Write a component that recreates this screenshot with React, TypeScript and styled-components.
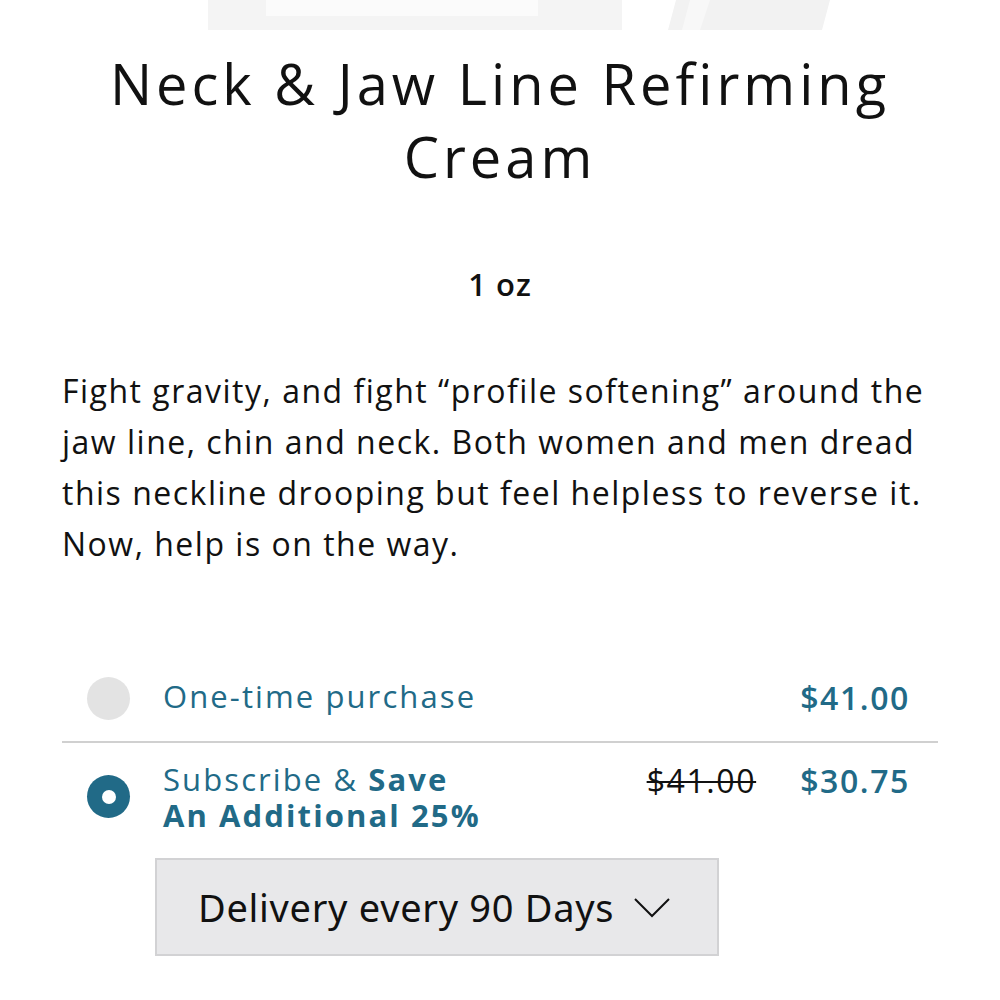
import styled, { createGlobalStyle } from 'styled-components';
import { useState } from 'react';

const GlobalStyle = createGlobalStyle`
  body {
    margin: 0;
    background: #ffffff;
    font-family: 'Open Sans', 'Noto Sans', sans-serif;
  }
`;

const TEAL = '#216a87';

const Page = styled.div`
  width: 1000px;
  height: 1000px;
  overflow: hidden;
  display: flex;
  flex-direction: column;
`;

const ImageStrip = styled.svg`
  display: block;
  width: 1000px;
  height: 30px;
`;

const Content = styled.div`
  padding: 0 62px;
  display: flex;
  flex-direction: column;
`;

const Title = styled.h1`
  margin: 17px 0 0;
  text-align: center;
  font-size: 56px;
  line-height: 73px;
  font-weight: 400;
  color: #111;
  letter-spacing: 4px;
`;

const Size = styled.div`
  margin-top: 70px;
  text-align: center;
  font-size: 31px;
  font-weight: 600;
  color: #111;
  letter-spacing: 1px;
`;

const Description = styled.p`
  margin: 60px 0 0;
  font-size: 32px;
  line-height: 51px;
  color: #111;
  letter-spacing: 1.5px;
`;

const Options = styled.div`
  margin-top: 93px;
  display: flex;
  flex-direction: column;
`;

const OptionRow = styled.label<{ $divider?: boolean }>`
  display: grid;
  grid-template-columns: 76px 1fr auto;
  align-items: start;
  padding: ${(p) => (p.$divider ? '11px 28px 21px 25px' : '13px 28px 0 25px')};
  border-bottom: ${(p) => (p.$divider ? '2px solid #d0d0d0' : 'none')};
  cursor: pointer;
`;

const Radio = styled.span<{ $checked?: boolean }>`
  align-self: center;
  width: 43px;
  height: 43px;
  border-radius: 50%;
  box-sizing: border-box;
  margin-top: 4px;
  background: ${(p) => (p.$checked ? TEAL : '#e3e3e3')};
  display: flex;
  align-items: center;
  justify-content: center;

  &::after {
    content: '';
    width: 14px;
    height: 14px;
    border-radius: 50%;
    background: #fff;
    display: ${(p) => (p.$checked ? 'block' : 'none')};
  }
`;

const OptionLabel = styled.div`
  font-size: 31px;
  line-height: 36px;
  color: ${TEAL};
  padding-top: 5px;
  letter-spacing: 2.1px;

  b {
    font-weight: 700;
    letter-spacing: 2.1px;
  }
`;

const Prices = styled.div`
  display: flex;
  gap: 44px;
  font-size: 32px;
  line-height: 36px;
  padding-top: 7px;
  letter-spacing: 1.6px;
`;

const OldPrice = styled.span`
  color: #111;
  text-decoration: line-through;
  text-decoration-thickness: 2px;
`;

const Price = styled.span`
  color: ${TEAL};
  font-weight: 600;
`;

const Delivery = styled.button`
  margin: 25px 0 0 93px;
  width: 564px;
  height: 98px;
  box-sizing: border-box;
  background: #e8e8ea;
  border: 2px solid #d2d2d4;
  display: flex;
  align-items: center;
  gap: 19px;
  padding: 0 0 0 41px;
  font-family: 'Noto Sans', 'Open Sans', sans-serif;
  font-size: 38px;
  letter-spacing: 0.7px;
  color: #111;
  cursor: pointer;
`;

function Chevron() {
  return (
    <svg width="38" height="22" viewBox="0 0 38 22" fill="none">
      <path d="M2 3 L19 20 L36 3" stroke="#111" strokeWidth="2" />
    </svg>
  );
}

function App() {
  const [plan, setPlan] = useState<'once' | 'subscribe'>('subscribe');

  return (
    <Page>
      <GlobalStyle />
      <ImageStrip viewBox="0 0 1000 30">
        <rect x="208" y="0" width="414" height="30" fill="#f4f4f4" />
        <rect x="266" y="0" width="272" height="16" fill="#fbfbfb" />
        <polygon points="676,0 830,0 822,30 668,30" fill="#f2f2f2" />
        <polygon points="690,0 710,0 700,30 682,30" fill="#f8f8f8" />
      </ImageStrip>
      <Content>
        <Title>
          Neck &amp; Jaw Line Refirming
          <br />
          Cream
        </Title>
        <Size>1 oz</Size>
        <Description>
          Fight gravity, and fight “profile softening” around the jaw line, chin and neck. Both
          women and men dread this neckline drooping but feel helpless to reverse it. Now, help is
          on the way.
        </Description>
        <Options>
          <OptionRow $divider onClick={() => setPlan('once')}>
            <Radio $checked={plan === 'once'} />
            <OptionLabel>One-time purchase</OptionLabel>
            <Prices>
              <Price>$41.00</Price>
            </Prices>
          </OptionRow>
          <OptionRow onClick={() => setPlan('subscribe')}>
            <Radio $checked={plan === 'subscribe'} />
            <OptionLabel>
              Subscribe &amp; <b>Save</b>
              <br />
              <b>An Additional 25%</b>
            </OptionLabel>
            <Prices>
              <OldPrice>$41.00</OldPrice>
              <Price>$30.75</Price>
            </Prices>
          </OptionRow>
          <Delivery>
            Delivery every 90 Days
            <Chevron />
          </Delivery>
        </Options>
      </Content>
    </Page>
  );
}

export default App;
